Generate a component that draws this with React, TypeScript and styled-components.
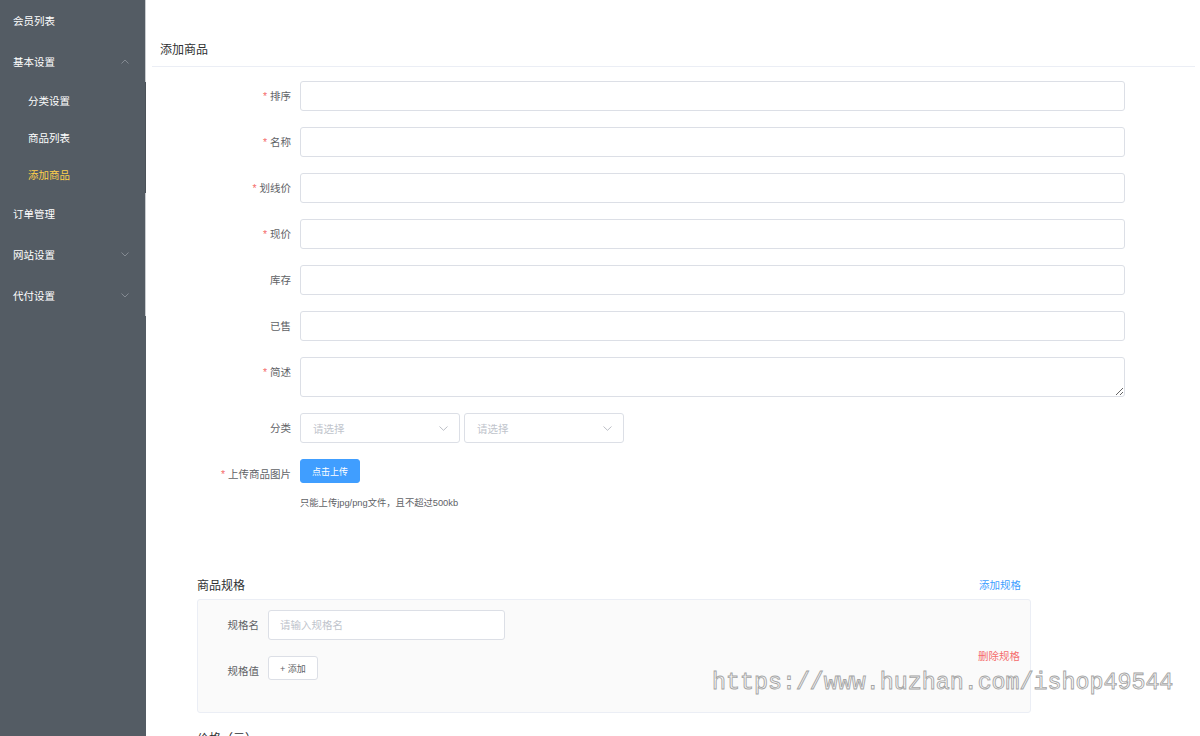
import styled, { createGlobalStyle } from "styled-components";

const sideBg = "#545c64";
const textRegular = "#606266";
const borderBase = "#dcdfe6";
const placeholder = "#c0c4cc";
const primary = "#409eff";
const danger = "#f56c6c";

const GlobalStyle = createGlobalStyle`
  html, body {
    margin: 0;
    padding: 0;
    overflow: hidden;
  }
  body {
    font-family: "Liberation Sans", "Noto Sans CJK SC", sans-serif;
    color: ${textRegular};
  }
  * {
    box-sizing: border-box;
  }
`;

const Shell = styled.div`
  position: relative;
  display: flex;
  width: 1200px;
  height: 736px;
  overflow: hidden;
  background: #fff;
`;

const Aside = styled.aside`
  flex: 0 0 146px;
  background: ${sideBg};
`;

const Menu = styled.ul`
  margin: 0;
  padding: 0;
  list-style: none;
  border-right: 1px solid #c9ccd0;
`;

const MenuTitle = styled.li<{ $sub?: boolean; $active?: boolean }>`
  display: flex;
  align-items: center;
  justify-content: space-between;
  height: ${(p) => (p.$sub ? 37 : 41)}px;
  padding: 0 16px 0 ${(p) => (p.$sub ? 28 : 13)}px;
  font-size: 10.5px;
  color: ${(p) => (p.$active ? "#ffd04b" : "#fff")};
  cursor: pointer;
`;

const SubMenu = styled.ul`
  margin: 0 -1px 0 0;
  padding: 0;
  list-style: none;
  border-right: 1px solid #4b5259;
`;

const Arrow = ({ up }: { up?: boolean }) => (
  <svg width="8" height="5" viewBox="0 0 8 5">
    <polyline
      points={up ? "0.5,4.5 4,1 7.5,4.5" : "0.5,0.5 4,4 7.5,0.5"}
      fill="none"
      stroke="#8a9097"
      strokeWidth="0.9"
    />
  </svg>
);

const Main = styled.main`
  flex: 1;
  padding: 35px 5px 0 6px;
`;

const CardHeader = styled.div`
  padding: 7px 8px 8px;
  font-size: 12px;
  line-height: 16px;
  color: #303133;
  border-bottom: 1px solid #ebeef5;
`;

const FormBody = styled.form`
  padding: 14px 15px 0;
`;

const FormRow = styled.div`
  display: flex;
  align-items: flex-start;
  margin-bottom: 16px;
`;

const Label = styled.label<{ $required?: boolean }>`
  flex: 0 0 133px;
  padding-right: 9px;
  text-align: right;
  font-size: 10.5px;
  line-height: 30px;
  color: ${textRegular};

  &::before {
    content: ${(p) => (p.$required ? '"*"' : "none")};
    color: ${danger};
    margin-right: 3px;
  }
`;

const Input = styled.input`
  width: 825px;
  height: 30px;
  padding: 0 11px;
  border: 1px solid ${borderBase};
  border-radius: 3px;
  font-size: 10.5px;
  color: ${textRegular};
  outline: none;
  font-family: inherit;

  &::placeholder {
    color: ${placeholder};
  }
`;

const TextArea = styled.textarea`
  width: 825px;
  height: 40px;
  padding: 4px 11px;
  border: 1px solid ${borderBase};
  border-radius: 3px;
  resize: vertical;
  font-family: inherit;
  font-size: 10.5px;
  outline: none;
`;

const SelectGroup = styled.div`
  display: flex;
  gap: 4px;
`;

const SelectBox = styled.div`
  display: flex;
  align-items: center;
  justify-content: space-between;
  width: 160px;
  height: 30px;
  padding: 0 11px 0 12px;
  border: 1px solid ${borderBase};
  border-radius: 3px;
  font-size: 10.5px;
  color: ${placeholder};
`;

const Chevron = () => (
  <svg width="9" height="5" viewBox="0 0 9 5">
    <polyline
      points="0.5,0.5 4.5,4.3 8.5,0.5"
      fill="none"
      stroke="#b4b8bf"
      strokeWidth="0.9"
    />
  </svg>
);

const UploadCol = styled.div`
  display: flex;
  flex-direction: column;
  align-items: flex-start;
`;

const Button = styled.button<{ $primary?: boolean }>`
  height: 24px;
  padding: 0 11px;
  border-radius: 3px;
  border: 1px solid ${(p) => (p.$primary ? primary : borderBase)};
  background: ${(p) => (p.$primary ? primary : "#fff")};
  color: ${(p) => (p.$primary ? "#fff" : textRegular)};
  font-family: inherit;
  font-size: 9px;
  cursor: pointer;
`;

const Tip = styled.div`
  margin-top: 11px;
  font-size: 9.3px;
  line-height: 18px;
  color: ${textRegular};
`;

const SpecSection = styled.section`
  width: 834px;
  margin: 64px 0 0 30px;
`;

const SpecHead = styled.div`
  display: flex;
  align-items: center;
  justify-content: space-between;
  padding-right: 10px;
  height: 16px;
  margin-bottom: 7px;
`;

const SpecTitle = styled.h3`
  margin: 0;
  font-size: 12px;
  font-weight: normal;
  color: #303133;
`;

const TextLink = styled.span<{ $danger?: boolean }>`
  font-size: 10.5px;
  color: ${(p) => (p.$danger ? danger : primary)};
  cursor: pointer;
`;

const SpecBox = styled.div`
  padding: 10px 0 10px;
  background: #fafafa;
  border: 1px solid #ebeef5;
  border-radius: 3px;
`;

const SpecRow = styled.div`
  display: flex;
  align-items: flex-start;
  margin-bottom: 16px;
  padding-right: 10px;
`;

const SpecLabel = styled.label`
  flex: 0 0 70px;
  padding-right: 9px;
  text-align: right;
  font-size: 10.5px;
  line-height: 30px;
  color: ${textRegular};
`;

const SpecInput = styled(Input)`
  width: 237px;
`;

const DeleteLink = styled(TextLink)`
  margin: -8px 0 0 auto;
  line-height: 16px;
`;

const PriceTitle = styled(SpecTitle)`
  margin-top: 16px;
`;

const Watermark = styled.div`
  position: absolute;
  left: 712px;
  top: 668px;
  font-family: "Liberation Mono", monospace;
  font-size: 23.3px;
  line-height: 30px;
  color: rgba(255, 255, 255, 0.4);
  -webkit-text-stroke: 0.9px #a4a4a4;
  pointer-events: none;
  white-space: nowrap;
`;

const fields = [
  { label: "排序", required: true },
  { label: "名称", required: true },
  { label: "划线价", required: true },
  { label: "现价", required: true },
  { label: "库存" },
  { label: "已售" },
];

export default function App() {
  return (
    <>
      <GlobalStyle />
      <Shell>
        <Aside>
          <Menu>
            <MenuTitle>会员列表</MenuTitle>
            <MenuTitle>
              基本设置
              <Arrow up />
            </MenuTitle>
            <SubMenu>
              <MenuTitle $sub>分类设置</MenuTitle>
              <MenuTitle $sub>商品列表</MenuTitle>
              <MenuTitle $sub $active>
                添加商品
              </MenuTitle>
            </SubMenu>
            <MenuTitle>订单管理</MenuTitle>
            <MenuTitle>
              网站设置
              <Arrow />
            </MenuTitle>
            <MenuTitle>
              代付设置
              <Arrow />
            </MenuTitle>
          </Menu>
        </Aside>

        <Main>
          <CardHeader>添加商品</CardHeader>
          <FormBody onSubmit={(e) => e.preventDefault()}>
            {fields.map((f) => (
              <FormRow key={f.label}>
                <Label $required={f.required}>{f.label}</Label>
                <Input />
              </FormRow>
            ))}
            <FormRow>
              <Label $required>简述</Label>
              <TextArea />
            </FormRow>
            <FormRow>
              <Label>分类</Label>
              <SelectGroup>
                <SelectBox>
                  请选择
                  <Chevron />
                </SelectBox>
                <SelectBox>
                  请选择
                  <Chevron />
                </SelectBox>
              </SelectGroup>
            </FormRow>
            <FormRow>
              <Label $required>上传商品图片</Label>
              <UploadCol>
                <Button $primary type="button">
                  点击上传
                </Button>
                <Tip>只能上传jpg/png文件，且不超过500kb</Tip>
              </UploadCol>
            </FormRow>

            <SpecSection>
              <SpecHead>
                <SpecTitle>商品规格</SpecTitle>
                <TextLink>添加规格</TextLink>
              </SpecHead>
              <SpecBox>
                <SpecRow>
                  <SpecLabel>规格名</SpecLabel>
                  <SpecInput placeholder="请输入规格名" />
                </SpecRow>
                <SpecRow>
                  <SpecLabel>规格值</SpecLabel>
                  <Button type="button">+ 添加</Button>
                  <DeleteLink $danger>删除规格</DeleteLink>
                </SpecRow>
              </SpecBox>
              <PriceTitle>价格（元）</PriceTitle>
            </SpecSection>
          </FormBody>
        </Main>

        <Watermark>https://www.huzhan.com/ishop49544</Watermark>
      </Shell>
    </>
  );
}
